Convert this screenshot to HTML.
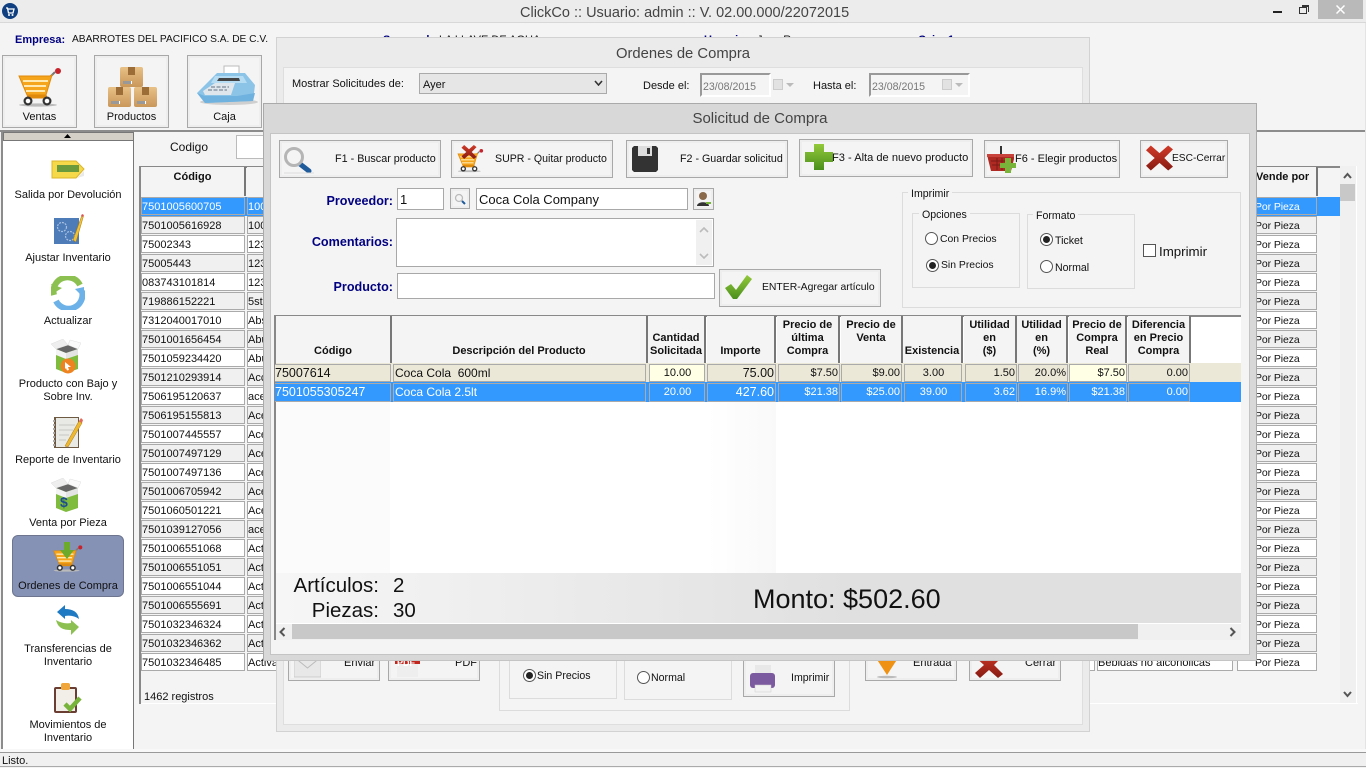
<!DOCTYPE html>
<html lang="es"><head><meta charset="utf-8"><title>ClickCo</title>
<style>
html,body{margin:0;padding:0}
body{width:1366px;height:768px;overflow:hidden;position:relative;background:#f4f4f4;font:11px/14px "Liberation Sans",sans-serif;color:#111}
div,svg,span.t{position:absolute;box-sizing:border-box}
.t{position:absolute;white-space:nowrap;line-height:14px}
.c{text-align:center}
.nv{color:#000080;font-weight:bold}
.btn{background:#f4f4f4;border:1px solid #a8a8a8;box-shadow:inset 0 0 0 2px #eeeeee}
.side{left:4px;width:128px;text-align:center;line-height:13px;font-size:11px;color:#111;white-space:nowrap}
.row{position:relative;height:19px;width:1340px;left:0}
.row div{top:0;height:18px;border:1px solid #aaa;line-height:16px;padding:1px 0 0 0;font-size:11px;white-space:nowrap;overflow:hidden}
.c1{left:141px;width:104px}.c2{left:247px;width:848px}.c3{left:1097px;width:136px}.c4{left:1237px;width:80px;padding-left:17px!important;font-size:10.5px!important;letter-spacing:-.1px}
.row.w div{background:#fff}.row.g div{background:#f0f0f0}
.row.sel{background:#3399ff;color:#fff}.row.sel div{background:#3399ff}
.hd{top:167px;height:29px;background:#f4f4f4;border-right:2px solid #777;font-weight:bold;text-align:center;padding-top:3px;line-height:14px}
.th{top:316px;height:47px;background:#f4f4f4;border-right:2px solid #777;font-weight:bold;text-align:center;line-height:13px;white-space:nowrap}
.r1,.r2{border:1px solid #aaa;white-space:nowrap;line-height:16px;font-size:11px;overflow:hidden;padding:0 0 0 1px}
.r1{top:364px;height:18px;background:#ebe8d8}
.r2{top:383px;height:19px;background:#3399ff;color:#fff}
.num{text-align:right;padding:0 1px 0 0}
.ctr{text-align:center}
.yl{background:#ffffe6}
.in{background:#fff;border:1px solid #a8a8a8}
.gb{border:1px solid #dcdcdc}
.lg{position:absolute;background:#f4f4f4;padding:0 3px;white-space:nowrap;line-height:14px}
.rd{width:13px;height:13px;border:1px solid #555;border-radius:50%;background:#fff}
.rd.on::after{content:"";position:absolute;left:2px;top:2px;width:7px;height:7px;border-radius:50%;background:#222}
</style></head><body>
<svg width="0" height="0" style="left:0;top:0"><defs>
<linearGradient id="rg" x1="0" y1="0" x2="0" y2="1"><stop offset="0" stop-color="#d23a28"/><stop offset="1" stop-color="#861a12"/></linearGradient>
<linearGradient id="gg" x1="0" y1="0" x2="0" y2="1"><stop offset="0" stop-color="#93c93a"/><stop offset="1" stop-color="#4a8f1c"/></linearGradient>
<linearGradient id="bx" x1="0" y1="0" x2="0" y2="1"><stop offset="0" stop-color="#e8c085"/><stop offset="1" stop-color="#c9975a"/></linearGradient>
<symbol id="cart" viewBox="0 0 44 40">
<ellipse cx="20" cy="37" rx="19" ry="1.6" fill="#bbb"/>
<path d="M31 10L37 4" stroke="#777" stroke-width="2"/>
<circle cx="40" cy="3" r="3" fill="#c8232c"/>
<path d="M1 8H32L34 7L28 27H9Z" fill="#f4a51c" stroke="#e08a0c"/>
<path d="M5 13H30M6 18H28M8 23H27" stroke="#ffe9b0" stroke-width="2"/>
<path d="M9 29H29" stroke="#e08a0c" stroke-width="3"/>
<circle cx="10" cy="33" r="3.4" fill="#fff" stroke="#333" stroke-width="2.2"/>
<circle cx="29" cy="33" r="3.4" fill="#fff" stroke="#333" stroke-width="2.2"/>
</symbol>
<symbol id="box" viewBox="0 0 23 21">
<rect width="23" height="20" rx="2" fill="url(#bx)"/>
<rect x="8" width="7" height="8" fill="#9c6d36"/><rect x="3" y="14" width="9" height="3" fill="#fff"/><path d="M4 14v3M6 14v3M8 14v3M10 14v3" stroke="#333"/>
</symbol>
<symbol id="ebox" viewBox="0 0 30 34">
<path d="M5 10L17 6L27 10V30L15 34L5 30Z" fill="#7fbb3c"/>
<path d="M5 10L15 14L27 10L17 6Z" fill="#666"/>
<path d="M5 10L0 5L12 0L17 6Z" fill="#eee" stroke="#ddd" stroke-width=".5"/>
<path d="M27 10L30 4L19 1L17 6Z" fill="#fafafa" stroke="#ddd" stroke-width=".5"/>
<path d="M5 10L15 14V20L5 16Z" fill="#f4f4f4"/><path d="M27 10L15 14V20L27 16Z" fill="#e4e4e4"/>
</symbol>
<symbol id="x" viewBox="0 0 28 26">
<path d="M0 5L5 0L14 8L23 0L28 4L19 13L28 22L23 26L14 18L5 26L0 21L9 13Z" fill="url(#rg)"/>
</symbol>
</defs></svg>

<!-- title bar -->
<div style="left:0;top:0;width:1366px;height:23px;background:#ececec;border-bottom:1px solid #d8d8d8"></div>
<svg style="left:2px;top:3px" width="16" height="16" viewBox="0 0 16 16"><circle cx="8" cy="8" r="8" fill="#0f3f80"/><path d="M4 5H5.5L6.5 10H11L12 6H6" fill="none" stroke="#fff" stroke-width="1.3"/><circle cx="7" cy="12" r="1" fill="#fff"/><circle cx="10.5" cy="12" r="1" fill="#fff"/></svg>
<span class="t" style="left:520px;top:5px;font-size:14.5px;color:#444;line-height:16px">ClickCo :: Usuario: admin :: V. 02.00.000/22072015</span>
<div style="left:1273px;top:11px;width:9px;height:2px;background:#222"></div>
<div style="left:1299px;top:7px;width:8px;height:7px;border:1.5px solid #333"></div>
<div style="left:1302px;top:5px;width:7px;height:2px;background:#333"></div>
<div style="left:1308px;top:5px;width:1px;height:7px;background:#333"></div>
<div style="left:1318px;top:0;width:45px;height:19px;background:#b9b9b9"></div>
<svg style="left:1336px;top:5px" width="9" height="9" viewBox="0 0 9 9"><path d="M.5 .5L8.5 8.5M8.5 .5L.5 8.5" stroke="#fff" stroke-width="1.5"/></svg>

<!-- company info -->
<span class="t nv" style="left:15px;top:33px">Empresa:</span>
<span class="t" style="left:72px;top:33px;font-size:10.2px">ABARROTES DEL PACIFICO S.A. DE C.V.</span>
<span class="t nv" style="left:383px;top:33px">Sucursal:</span><span class="t" style="left:439px;top:33px">LA LLAVE DE AGUA</span>
<span class="t nv" style="left:704px;top:33px">Usuario:</span><span class="t" style="left:757px;top:33px">Jose R.</span>
<span class="t nv" style="left:918px;top:33px">Caja: 1</span>

<!-- top buttons -->
<div class="btn" style="left:2px;top:55px;width:75px;height:73px"></div>
<svg style="left:18px;top:68px" width="44" height="40"><use href="#cart"/></svg>
<span class="t c" style="left:2px;top:110px;width:75px">Ventas</span>
<div class="btn" style="left:94px;top:55px;width:75px;height:73px"></div>
<svg style="left:120px;top:67px" width="23" height="21"><use href="#box"/></svg>
<svg style="left:108px;top:87px" width="23" height="21"><use href="#box"/></svg>
<svg style="left:134px;top:87px" width="23" height="21"><use href="#box"/></svg>
<span class="t c" style="left:94px;top:110px;width:75px">Productos</span>
<div class="btn" style="left:187px;top:55px;width:75px;height:73px"></div>
<svg style="left:197px;top:63px" width="62" height="44" viewBox="0 0 62 44">
<ellipse cx="32" cy="39" rx="29" ry="3" fill="#cfcfcf"/>
<path d="M27 3H42V15H27Z" fill="#fff" stroke="#bbb"/>
<path d="M0 30L20 10H48L58 22L56 38L8 40Z" fill="#8cc4e8"/>
<path d="M18 13H46L50 20H14Z" fill="#b5dcf2"/><path d="M22 15H42L43 18H20Z" fill="#444"/>
<path d="M6 28L18 20H38L34 32H8Z" fill="#dfe7ec"/>
<path d="M14 24H32M11 27H30" stroke="#8c9aa6" stroke-width="1.5" stroke-dasharray="4 1.5"/>
<path d="M0 30L8 40L56 38L58 30L40 33L8 33Z" fill="#6fb2df"/>
</svg>
<span class="t c" style="left:187px;top:110px;width:75px">Caja</span>

<!-- frames -->
<div style="left:0;top:130px;width:1366px;height:2px;background:#8c8c8c"></div>
<div style="left:1px;top:131px;width:2px;height:618px;background:#8c8c8c"></div>
<div style="left:3px;top:132px;width:131px;height:617px;background:#fff;border-right:1px solid #777"></div>
<div style="left:3px;top:132px;width:131px;height:9px;background:#d4d0c8;border:1px solid #777"></div>
<svg style="left:63px;top:133px" width="9" height="6"><path d="M1 5H8L4.5 1Z" fill="#000"/></svg>

<!-- sidebar items -->
<svg style="left:51px;top:159px" width="34" height="21" viewBox="0 0 34 21"><path d="M1 2H25L33 10L25 19H1Z" fill="#f6d94a" stroke="#dcb52b"/><path d="M6 6H28V13H6Z" fill="#6a9a3c"/><path d="M26 19L33 12V17Z" fill="#e9e9e9"/></svg>
<div class="side" style="top:189px">Salida por Devolución</div>
<svg style="left:54px;top:214px" width="30" height="31" viewBox="0 0 30 31"><rect y="4" width="25" height="26" fill="#4d7cb8"/><g fill="none" stroke="#a9c0e0" stroke-width="1.2" stroke-dasharray="2 1"><circle cx="8" cy="13" r="4.5"/><circle cx="16" cy="22" r="4.5"/></g><path d="M19 26L28 1L29.5 2L22 28Z" fill="#f2c230" stroke="#a5761a" stroke-width=".5"/><path d="M27 2L28 0L30 1L29 3Z" fill="#d9534f"/></svg>
<div class="side" style="top:252px">Ajustar Inventario</div>
<svg style="left:51px;top:276px" width="34" height="34" viewBox="0 0 34 34"><path d="M3 19A14 14 0 0 1 29 9" fill="none" stroke="#8cc152" stroke-width="6"/><path d="M3 17L0 8L11 12Z" fill="#8cc152"/><path d="M31 15A14 14 0 0 1 5 25" fill="none" stroke="#6cb2e8" stroke-width="6"/><path d="M24 13L33 11L33 22Z" fill="#6cb2e8"/></svg>
<div class="side" style="top:315px">Actualizar</div>
<svg style="left:51px;top:339px" width="30" height="34"><use href="#ebox"/></svg>
<svg style="left:60px;top:358px" width="16" height="16" viewBox="0 0 16 16"><circle cx="8" cy="8" r="7.5" fill="#ef8320"/><path d="M5 4L11 9H8L9 12L7 12.5L6 10L5 11Z" fill="#fff"/></svg>
<div class="side" style="top:378px">Producto con Bajo y<br>Sobre Inv.</div>
<svg style="left:53px;top:417px" width="30" height="31" viewBox="0 0 30 31"><rect x="1" width="25" height="31" fill="#6e5a42"/><rect x="3" y="1" width="22" height="29" fill="#e9e9e6"/><path d="M6 8H22M6 13H20M6 18H16M6 23H13" stroke="#c7c7c2"/><path d="M1 3v26" stroke="#aaa" stroke-width="2" stroke-dasharray="2 2"/><path d="M12 29L26 4L29 6L15 30Z" fill="#eeb92f" stroke="#a5761a" stroke-width=".5"/><path d="M26 4L28 1L30 3L29 6Z" fill="#e26a5a"/></svg>
<div class="side" style="top:454px">Reporte de Inventario</div>
<svg style="left:51px;top:478px" width="30" height="34"><use href="#ebox"/></svg>
<span class="t" style="left:60px;top:494px;font:bold 14px/16px 'Liberation Sans',sans-serif;color:#1c4c94">$</span>
<div class="side" style="top:517px">Venta por Pieza</div>
<div style="left:12px;top:535px;width:112px;height:62px;background:#8592b5;border:1px solid #6d768e;border-radius:6px"></div>
<svg style="left:53px;top:545px" width="30" height="28"><use href="#cart"/></svg>
<svg style="left:60px;top:542px" width="14" height="17" viewBox="0 0 14 17"><path d="M4 0H10V8H14L7 17L0 8H4Z" fill="#6caa2c"/></svg>
<div class="side" style="top:580px">Ordenes de Compra</div>
<svg style="left:56px;top:605px" width="24" height="30" viewBox="0 0 24 30"><path d="M1 7L9 0V4C17 4 22 7 23 14C19 11 14 10 9 11V14Z" fill="#1f7ac4"/><path d="M23 22L15 30V25C7 25 2 23 0 15C5 18 10 19 15 18V15Z" fill="#8cc152"/></svg>
<div class="side" style="top:643px">Transferencias de<br>Inventario</div>
<svg style="left:54px;top:682px" width="28" height="32" viewBox="0 0 28 32"><rect y="5" width="23" height="26" rx="2" fill="#6b3e34"/><rect x="2" y="7" width="19" height="22" fill="#f1efe8"/><rect x="7" y="1" width="9" height="7" rx="2" fill="#f0a63a"/><path d="M11 22L16 27L26 16" fill="none" stroke="#78b33a" stroke-width="4.5"/></svg>
<div class="side" style="top:719px">Movimientos de<br>Inventario</div>

<!-- main grid -->
<span class="t" style="left:170px;top:140px;font-size:12px">Codigo</span>
<div class="in" style="left:236px;top:135px;width:60px;height:24px;border-color:#bbb"></div>
<div style="left:139px;top:166px;width:1201px;height:2px;background:#888"></div>
<div style="left:139px;top:166px;width:2px;height:538px;background:#888"></div>
<div class="hd" style="left:141px;width:105px">Código</div>
<div class="hd" style="left:247px;width:850px"></div>
<div class="hd" style="left:1097px;width:140px"></div>
<div class="hd" style="left:1237px;width:81px;text-align:left;padding-left:19px">Vende por</div>
<div style="left:141px;top:197px;width:1199px;height:475px;overflow:hidden">
<div style="left:-141px;top:0;width:1340px">
<div class="row sel"><div class="c1">7501005600705</div><div class="c2">100</div><div class="c3"></div><div class="c4">Por Pieza</div></div>
<div class="row g"><div class="c1">7501005616928</div><div class="c2">100</div><div class="c3"></div><div class="c4">Por Pieza</div></div>
<div class="row w"><div class="c1">75002343</div><div class="c2">123</div><div class="c3"></div><div class="c4">Por Pieza</div></div>
<div class="row g"><div class="c1">75005443</div><div class="c2">123</div><div class="c3"></div><div class="c4">Por Pieza</div></div>
<div class="row w"><div class="c1">083743101814</div><div class="c2">123</div><div class="c3"></div><div class="c4">Por Pieza</div></div>
<div class="row g"><div class="c1">719886152221</div><div class="c2">5st</div><div class="c3"></div><div class="c4">Por Pieza</div></div>
<div class="row w"><div class="c1">7312040017010</div><div class="c2">Abs</div><div class="c3"></div><div class="c4">Por Pieza</div></div>
<div class="row g"><div class="c1">7501001656454</div><div class="c2">Abu</div><div class="c3"></div><div class="c4">Por Pieza</div></div>
<div class="row w"><div class="c1">7501059234420</div><div class="c2">Abu</div><div class="c3"></div><div class="c4">Por Pieza</div></div>
<div class="row g"><div class="c1">7501210293914</div><div class="c2">Acc</div><div class="c3"></div><div class="c4">Por Pieza</div></div>
<div class="row w"><div class="c1">7506195120637</div><div class="c2">ace</div><div class="c3"></div><div class="c4">Por Pieza</div></div>
<div class="row g"><div class="c1">7506195155813</div><div class="c2">Ace</div><div class="c3"></div><div class="c4">Por Pieza</div></div>
<div class="row w"><div class="c1">7501007445557</div><div class="c2">Ace</div><div class="c3"></div><div class="c4">Por Pieza</div></div>
<div class="row g"><div class="c1">7501007497129</div><div class="c2">Ace</div><div class="c3"></div><div class="c4">Por Pieza</div></div>
<div class="row w"><div class="c1">7501007497136</div><div class="c2">Ace</div><div class="c3"></div><div class="c4">Por Pieza</div></div>
<div class="row g"><div class="c1">7501006705942</div><div class="c2">Ace</div><div class="c3"></div><div class="c4">Por Pieza</div></div>
<div class="row w"><div class="c1">7501060501221</div><div class="c2">Ace</div><div class="c3"></div><div class="c4">Por Pieza</div></div>
<div class="row g"><div class="c1">7501039127056</div><div class="c2">ace</div><div class="c3"></div><div class="c4">Por Pieza</div></div>
<div class="row w"><div class="c1">7501006551068</div><div class="c2">Act</div><div class="c3"></div><div class="c4">Por Pieza</div></div>
<div class="row g"><div class="c1">7501006551051</div><div class="c2">Act</div><div class="c3"></div><div class="c4">Por Pieza</div></div>
<div class="row w"><div class="c1">7501006551044</div><div class="c2">Act</div><div class="c3"></div><div class="c4">Por Pieza</div></div>
<div class="row g"><div class="c1">7501006555691</div><div class="c2">Act</div><div class="c3"></div><div class="c4">Por Pieza</div></div>
<div class="row w"><div class="c1">7501032346324</div><div class="c2">Act</div><div class="c3"></div><div class="c4">Por Pieza</div></div>
<div class="row g"><div class="c1">7501032346362</div><div class="c2">Act</div><div class="c3"></div><div class="c4">Por Pieza</div></div>
<div class="row w"><div class="c1">7501032346485</div><div class="c2">Activador</div><div class="c3">Bebidas no alcohólicas</div><div class="c4">Por Pieza</div></div>
</div></div>
<span class="t" style="left:144px;top:690px">1462 registros</span>
<div style="left:141px;top:703px;width:1217px;height:1px;background:#fff"></div>
<div style="left:1340px;top:166px;width:17px;height:537px;background:#f0f0f0;border-right:1px solid #fff"></div>
<div style="left:1340px;top:184px;width:15px;height:17px;background:#c8c8c8"></div>
<svg style="left:1343px;top:172px" width="9" height="7"><path d="M1 6L4.5 2L8 6" fill="none" stroke="#555" stroke-width="2"/></svg>
<svg style="left:1343px;top:691px" width="9" height="7"><path d="M1 1L4.5 5L8 1" fill="none" stroke="#555" stroke-width="2"/></svg>

<!-- status bar -->
<div style="left:0;top:749px;width:1366px;height:3px;background:#f8f8f8"></div>
<div style="left:0;top:752px;width:1366px;height:15px;background:#f0f0f0;border-top:1px solid #999;border-bottom:1px solid #aaa"></div>
<span class="t" style="left:2px;top:754px">Listo.</span>
<div style="left:1365px;top:23px;width:1px;height:726px;background:#e4e4e4"></div>

<!-- middle modal -->
<div style="left:276px;top:37px;width:814px;height:695px;background:#ebebeb;border:1px solid #d2d2d2"></div>
<div style="left:283px;top:67px;width:800px;height:658px;background:#f4f4f4;border:1px solid #dedede"></div>
<span class="t c" style="left:276px;top:46px;width:814px;font-size:14.8px;line-height:16px;color:#444">Ordenes de Compra</span>
<span class="t" style="left:292px;top:77px">Mostrar Solicitudes de:</span>
<div style="left:419px;top:73px;width:188px;height:21px;background:#e6e6e6;border:1px solid #aaa"></div>
<span class="t" style="left:423px;top:78px">Ayer</span>
<svg style="left:594px;top:80px" width="9" height="6"><path d="M1 1L4.5 5L8 1" fill="none" stroke="#333" stroke-width="1.6"/></svg>
<span class="t" style="left:643px;top:79px">Desde el:</span>
<div style="left:700px;top:73px;width:71px;height:24px;background:#f4f4f4;border:2px solid #fff;border-top-color:#999;border-left-color:#999"></div>
<span class="t" style="left:703px;top:80px;color:#777;font-size:10.6px">23/08/2015</span>
<div style="left:773px;top:79px;width:10px;height:11px;background:#e2e2e2;border:1px solid #ccc"></div>
<svg style="left:786px;top:83px" width="9" height="5"><path d="M0 0H8L4 4Z" fill="#bbb"/></svg>
<span class="t" style="left:813px;top:79px">Hasta el:</span>
<div style="left:869px;top:73px;width:101px;height:24px;background:#f4f4f4;border:2px solid #fff;border-top-color:#999;border-left-color:#999"></div>
<span class="t" style="left:872px;top:80px;color:#777;font-size:10.6px">23/08/2015</span>
<div style="left:942px;top:79px;width:10px;height:11px;background:#e2e2e2;border:1px solid #ccc"></div>
<svg style="left:955px;top:83px" width="9" height="5"><path d="M0 0H8L4 4Z" fill="#bbb"/></svg>

<!-- middle modal bottom part -->
<div class="btn" style="left:288px;top:640px;width:92px;height:41px"></div>
<svg style="left:294px;top:655px" width="27" height="24" viewBox="0 0 27 24"><path d="M0 2H27V22H0Z" fill="#e8e8e8" stroke="#ccc"/><path d="M0 2L13.5 13L27 2" fill="none" stroke="#bbb"/></svg>
<span class="t" style="left:344px;top:656px">Enviar</span>
<div class="btn" style="left:388px;top:640px;width:92px;height:41px"></div>
<svg style="left:394px;top:655px" width="27" height="24"><rect x="1" y="0" width="25" height="9" fill="#c0281f"/><rect x="3" y="9" width="21" height="13" fill="#eee"/></svg>
<span class="t" style="left:397px;top:656px;color:#fff;font-weight:bold;font-size:9px">PDF</span>
<span class="t" style="left:455px;top:656px">PDF</span>
<div class="gb" style="left:499px;top:640px;width:351px;height:71px"></div>
<div class="gb" style="left:509px;top:640px;width:108px;height:59px"></div>
<div class="gb" style="left:624px;top:640px;width:108px;height:60px"></div>
<div class="rd on" style="left:523px;top:669px"></div><span class="t" style="left:537px;top:669px;font-size:10.6px">Sin Precios</span>
<div class="rd" style="left:637px;top:671px"></div><span class="t" style="left:651px;top:671px;font-size:10.6px">Normal</span>
<div class="btn" style="left:743px;top:650px;width:92px;height:47px"></div>
<svg style="left:750px;top:665px" width="26" height="28" viewBox="0 0 26 28"><rect x="5" y="0" width="16" height="9" fill="#e8e8e8"/><rect x="0" y="8" width="25" height="15" rx="3" fill="#7c5aa0"/><rect x="5" y="20" width="16" height="7" fill="#f2f2f2" stroke="#ccc" stroke-width=".5"/></svg>
<span class="t" style="left:791px;top:671px;font-size:10.6px">Imprimir</span>
<div class="btn" style="left:865px;top:640px;width:92px;height:41px"></div>
<svg style="left:874px;top:655px" width="26" height="24" viewBox="0 0 26 24"><path d="M0 0H26L13 20Z" fill="#ef9113"/><ellipse cx="13" cy="22" rx="10" ry="1.2" fill="#bbb"/></svg>
<span class="t" style="left:913px;top:656px">Entrada</span>
<div class="btn" style="left:969px;top:640px;width:92px;height:41px"></div>
<svg style="left:975px;top:652px" width="28" height="26"><use href="#x"/></svg>
<span class="t" style="left:1025px;top:656px">Cerrar</span>

<!-- top modal -->
<div style="left:263px;top:103px;width:994px;height:558px;background:#d8d8d8;border:1px solid #aaa;border-bottom-color:#c4c4c4"></div>
<div style="left:270px;top:133px;width:980px;height:522px;background:#f4f4f4;border:1px solid #c4c4c4"></div>
<span class="t c" style="left:263px;top:111px;width:994px;font-size:15px;line-height:16px;color:#444">Solicitud de Compra</span>

<!-- toolbar -->
<div class="btn" style="left:279px;top:140px;width:162px;height:38px"></div>
<svg style="left:284px;top:147px" width="30" height="28" viewBox="0 0 30 28"><path d="M16 17L25 24" stroke="#205c9c" stroke-width="5" stroke-linecap="round"/><circle cx="10" cy="10" r="8.5" fill="#f4f4f4" stroke="#b5b5b5" stroke-width="3"/><path d="M0 26H30" stroke="#ddd"/></svg>
<span class="t" style="left:335px;top:152px;font-size:10.8px">F1 - Buscar producto</span>
<div class="btn" style="left:451px;top:140px;width:162px;height:38px"></div>
<svg style="left:457px;top:149px" width="27" height="24"><use href="#cart"/></svg>
<svg style="left:461px;top:145px" width="16" height="14"><use href="#x"/></svg>
<span class="t" style="left:495px;top:152px;font-size:10.6px">SUPR - Quitar producto</span>
<div class="btn" style="left:626px;top:140px;width:162px;height:38px"></div>
<svg style="left:632px;top:146px" width="26" height="26" viewBox="0 0 26 26"><path d="M2 0H24L26 2V24L24 26H2L0 24V2Z" fill="#333"/><rect x="6" y="0" width="14" height="10" fill="#ddd"/><rect x="15" y="2" width="3" height="6" fill="#333"/></svg>
<span class="t" style="left:680px;top:152px;font-size:10.7px">F2 - Guardar solicitud</span>
<div class="btn" style="left:799px;top:139px;width:174px;height:38px"></div>
<svg style="left:805px;top:144px" width="28" height="26" viewBox="0 0 28 26"><path d="M9 0H19V8H28V18H19V26H9V18H0V8H9Z" fill="url(#gg)"/></svg>
<span class="t" style="left:832px;top:151px;font-size:11.1px">F3 - Alta de nuevo producto</span>
<div class="btn" style="left:984px;top:140px;width:136px;height:38px"></div>
<svg style="left:987px;top:146px" width="32" height="27" viewBox="0 0 32 27"><path d="M14 0V9" stroke="#333" stroke-width="2"/><path d="M0 8H27V13L24 25H4L1 13Z" fill="#b02a24"/><path d="M0 8H27V11H0Z" fill="#c8433b"/><path d="M4 15H22M5 19H22M10 12V24M15 12V24" stroke="#7a1a14"/><path d="M18 12H24V17H29V22H24V27H18V22H13V17H18Z" fill="#78b33a"/></svg>
<span class="t" style="left:1015px;top:152px">F6 - Elegir productos</span>
<div class="btn" style="left:1140px;top:140px;width:88px;height:38px"></div>
<svg style="left:1146px;top:145px" width="27" height="26"><use href="#x"/></svg>
<span class="t" style="left:1172px;top:152px;font-size:10.2px">ESC-Cerrar</span>

<!-- form -->
<span class="t nv" style="left:293px;top:194px;width:100px;text-align:right;font-size:12.6px">Proveedor:</span>
<div class="in" style="left:397px;top:188px;width:47px;height:22px"></div>
<span class="t" style="left:400px;top:193px;font-size:13px">1</span>
<div class="btn" style="left:450px;top:188px;width:20px;height:21px"></div>
<svg style="left:454px;top:193px" width="12" height="12" viewBox="0 0 12 12"><circle cx="5" cy="5" r="3.5" fill="none" stroke="#bbb" stroke-width="1.3"/><path d="M8 8L11 11" stroke="#205c9c" stroke-width="2"/></svg>
<div class="in" style="left:476px;top:188px;width:212px;height:22px"></div>
<span class="t" style="left:479px;top:193px;font-size:13px">Coca Cola Company</span>
<div class="btn" style="left:693px;top:188px;width:21px;height:22px"></div>
<svg style="left:696px;top:191px" width="15" height="16" viewBox="0 0 15 16"><circle cx="7" cy="5" r="4" fill="#8a6a4a"/><path d="M1 15C1 10 13 10 13 15Z" fill="#333"/><path d="M10 11H15V13H10Z" fill="#78b33a"/></svg>
<span class="t nv" style="left:293px;top:235px;width:100px;text-align:right;font-size:12.6px">Comentarios:</span>
<div class="in" style="left:396px;top:218px;width:318px;height:49px"></div>
<div style="left:696px;top:220px;width:16px;height:45px;background:#f0f0f0"></div>
<svg style="left:699px;top:226px" width="10" height="7"><path d="M1 6L5 2L9 6" fill="none" stroke="#bbb" stroke-width="1.6"/></svg>
<svg style="left:699px;top:253px" width="10" height="7"><path d="M1 1L5 5L9 1" fill="none" stroke="#bbb" stroke-width="1.6"/></svg>
<span class="t nv" style="left:293px;top:280px;width:100px;text-align:right;font-size:12.6px">Producto:</span>
<div class="in" style="left:397px;top:273px;width:318px;height:26px"></div>
<div class="btn" style="left:719px;top:269px;width:162px;height:38px"></div>
<svg style="left:725px;top:275px" width="27" height="25" viewBox="0 0 27 25"><path d="M0 13L6 9L11 15L22 0L27 4L12 24H8Z" fill="url(#gg)"/></svg>
<span class="t" style="left:762px;top:281px;font-size:10.4px">ENTER-Agregar artículo</span>

<!-- imprimir group -->
<div class="gb" style="left:902px;top:192px;width:339px;height:116px"></div>
<span class="lg" style="left:908px;top:187px;font-size:10.6px">Imprimir</span>
<div class="gb" style="left:912px;top:213px;width:108px;height:75px"></div>
<span class="lg" style="left:919px;top:208px;font-size:10.6px">Opciones</span>
<div class="gb" style="left:1027px;top:214px;width:108px;height:75px"></div>
<span class="lg" style="left:1033px;top:209px;font-size:10.6px">Formato</span>
<div class="rd" style="left:925px;top:232px"></div><span class="t" style="left:940px;top:233px;font-size:10.4px">Con Precios</span>
<div class="rd on" style="left:926px;top:259px"></div><span class="t" style="left:941px;top:259px;font-size:10.4px">Sin Precios</span>
<div class="rd on" style="left:1040px;top:233px"></div><span class="t" style="left:1055px;top:234px;font-size:10.6px">Ticket</span>
<div class="rd" style="left:1040px;top:260px"></div><span class="t" style="left:1055px;top:261px;font-size:10.6px">Normal</span>
<div style="left:1143px;top:244px;width:13px;height:13px;background:#fff;border:1px solid #555"></div>
<span class="t" style="left:1159px;top:245px;font-size:13.3px">Imprimir</span>

<!-- order table -->
<div style="left:274px;top:315px;width:967px;height:325px;background:#fff;border-left:2px solid #888;border-top:2px solid #888"></div>
<div style="left:276px;top:402px;width:114px;height:171px;background:#fbfbfb"></div>
<div style="left:708px;top:402px;width:68px;height:171px;background:linear-gradient(90deg,#fff,#f9f9f9)"></div>
<div class="r1" style="left:276px;top:363px;width:965px;height:20px;border:0"></div>
<div class="r2" style="left:276px;top:382px;width:965px;height:20px;border:0"></div>

<div class="th" style="left:276px;width:116px;padding-top:29px">Código</div>
<div class="th" style="left:392px;width:256px;padding-top:29px">Descripción del Producto</div>
<div class="th" style="left:648px;width:58px;padding-top:16px">Cantidad<br>Solicitada</div>
<div class="th" style="left:707px;width:69px;padding-top:29px">Importe</div>
<div class="th" style="left:777px;width:63px;padding-top:3px">Precio de<br>última<br>Compra</div>
<div class="th" style="left:841px;width:62px;padding-top:3px">Precio de<br>Venta</div>
<div class="th" style="left:903px;width:60px;padding-top:29px">Existencia</div>
<div class="th" style="left:964px;width:53px;padding-top:3px">Utilidad<br>en<br>($)</div>
<div class="th" style="left:1017px;width:51px;padding-top:3px">Utilidad<br>en<br>(%)</div>
<div class="th" style="left:1069px;width:58px;padding-top:3px">Precio de<br>Compra<br>Real</div>
<div class="th" style="left:1128px;width:63px;padding-top:3px">Diferencia<br>en Precio<br>Compra</div>

<div class="r1" style="left:275px;width:116px;font-size:12.5px;padding-left:0;border-left:0">75007614</div>
<div class="r1" style="left:393px;width:253px;font-size:12px">Coca Cola&nbsp; 600ml</div>
<div class="r1 ctr yl" style="left:649px;width:56px">10.00</div>
<div class="r1 num" style="left:707px;width:69px;font-size:12.5px">75.00</div>
<div class="r1 num" style="left:778px;width:62px">$7.50</div>
<div class="r1 num" style="left:841px;width:61px">$9.00</div>
<div class="r1 ctr" style="left:904px;width:58px">3.00</div>
<div class="r1 num" style="left:965px;width:52px">1.50</div>
<div class="r1 num" style="left:1018px;width:50px">20.0%</div>
<div class="r1 num yl" style="left:1069px;width:58px">$7.50</div>
<div class="r1 num" style="left:1128px;width:62px">0.00</div>

<div class="r2" style="left:275px;width:116px;font-size:12.5px;padding-left:0;border-left:0">7501055305247</div>
<div class="r2" style="left:393px;width:253px;font-size:12px">Coca Cola 2.5lt</div>
<div class="r2 ctr" style="left:649px;width:56px">20.00</div>
<div class="r2 num" style="left:707px;width:69px;font-size:12.5px">427.60</div>
<div class="r2 num" style="left:778px;width:62px">$21.38</div>
<div class="r2 num" style="left:841px;width:61px">$25.00</div>
<div class="r2 ctr" style="left:904px;width:58px">39.00</div>
<div class="r2 num" style="left:965px;width:52px">3.62</div>
<div class="r2 num" style="left:1018px;width:50px">16.9%</div>
<div class="r2 num" style="left:1069px;width:58px">$21.38</div>
<div class="r2 num" style="left:1128px;width:62px">0.00</div>

<!-- totals -->
<div style="left:276px;top:573px;width:965px;height:50px;background:linear-gradient(90deg,#f6f6f6,#e0e0e0 60%,#e0e0e0)"></div>
<span class="t" style="left:279px;top:575px;width:100px;text-align:right;font-size:20.5px;line-height:22px">Artículos:</span>
<span class="t" style="left:393px;top:575px;font-size:20.5px;line-height:22px">2</span>
<span class="t" style="left:279px;top:600px;width:100px;text-align:right;font-size:20.5px;line-height:22px">Piezas:</span>
<span class="t" style="left:393px;top:600px;font-size:20.5px;line-height:22px">30</span>
<span class="t" style="left:753px;top:583px;font-size:27px;line-height:32px">Monto: $502.60</span>
<div style="left:276px;top:623px;width:965px;height:17px;background:#f0f0f0;border-top:1px solid #fff"></div>
<div style="left:292px;top:624px;width:846px;height:15px;background:#c8c8c8"></div>
<svg style="left:279px;top:627px" width="7" height="10"><path d="M5.5 1L1.5 5L5.5 9" fill="none" stroke="#555" stroke-width="2"/></svg>
<svg style="left:1229px;top:627px" width="7" height="10"><path d="M1.5 1L5.5 5L1.5 9" fill="none" stroke="#555" stroke-width="2"/></svg>
</body></html>
